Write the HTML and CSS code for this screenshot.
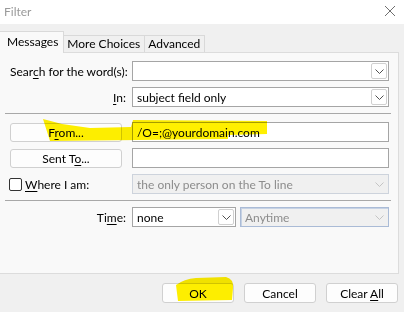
FILE: index.html
```html
<!DOCTYPE html>
<html lang="en">
<head>
    <meta charset="UTF-8">
    <title>Filter</title>
    <link rel="stylesheet" href="styles.css">
</head>
<body>
    <div class="window">
        <div class="titlebar">
            <span class="title">Filter</span>
            <svg class="close" width="12" height="12" viewBox="0 0 12 12">
                <path d="M1 1 L11 11 M11 1 L1 11" stroke="#6f6f6f" stroke-width="1" fill="none"/>
            </svg>
        </div>

        <div class="tabs">
            <div class="tab active">Messages</div>
            <div class="tab">More Choices</div>
            <div class="tab">Advanced</div>
        </div>

        <div class="panel">
            <div class="row">
                <label class="lbl">Sear<u>c</u>h for the word(s):</label>
                <div class="combo">
                    <span class="value"></span>
                    <span class="drop"><svg width="9" height="5" viewBox="0 0 9 5"><path d="M0.5 0.5 L4.5 4.5 L8.5 0.5" stroke="#505050" fill="none"/></svg></span>
                </div>
            </div>
            <div class="row">
                <label class="lbl"><u>I</u>n:</label>
                <div class="combo">
                    <span class="value">subject field only</span>
                    <span class="drop"><svg width="9" height="5" viewBox="0 0 9 5"><path d="M0.5 0.5 L4.5 4.5 L8.5 0.5" stroke="#505050" fill="none"/></svg></span>
                </div>
            </div>

            <div class="sep first"></div>

            <div class="row">
                <button class="btn side">F<u>r</u>om...</button>
                <div class="field">/O=;@yourdomain.com</div>
            </div>
            <div class="row">
                <button class="btn side">Sent T<u>o</u>...</button>
                <div class="field"></div>
            </div>
            <div class="row">
                <label class="check"><span class="box"></span><span><u>W</u>here I am:</span></label>
                <div class="combo disabled">
                    <span class="value">the only person on the To line</span>
                    <span class="drop"><svg width="9" height="5" viewBox="0 0 9 5"><path d="M0.5 0.5 L4.5 4.5 L8.5 0.5" stroke="#c4c4c4" fill="none"/></svg></span>
                </div>
            </div>

            <div class="sep"></div>

            <div class="row">
                <label class="lbl">Ti<u>m</u>e:</label>
                <div class="pair">
                    <div class="combo short">
                        <span class="value">none</span>
                        <span class="drop"><svg width="9" height="5" viewBox="0 0 9 5"><path d="M0.5 0.5 L4.5 4.5 L8.5 0.5" stroke="#505050" fill="none"/></svg></span>
                    </div>
                    <div class="combo disabled blue">
                        <span class="value">Anytime</span>
                        <span class="drop"><svg width="9" height="5" viewBox="0 0 9 5"><path d="M0.5 0.5 L4.5 4.5 L8.5 0.5" stroke="#c4c4c4" fill="none"/></svg></span>
                    </div>
                </div>
            </div>
        </div>

        <div class="footer">
            <button class="btn">OK</button>
            <button class="btn">Cancel</button>
            <button class="btn">Clear <u>A</u>ll</button>
        </div>

        <!-- highlighter marks drawn over the dialog -->
        <svg class="marker" width="404" height="312" viewBox="0 0 404 312">
            <path d="M43 119 L62 124 L90 128 L131 127 L133 120 L267 121 L267 134 L228 135 L228 139 L50 141 Z" fill="#fff000"/>
            <path d="M176 285 Q184 279 196 278 L226 277 Q234 279 233 288 L232 300 L178 301 Z" fill="#fff000"/>
        </svg>
    </div>
</body>
</html>
```

FILE: styles.css
```css
* {
    box-sizing: border-box;
    margin: 0;
    padding: 0;
}
body {
    background: #f0f0f0;
    font-family: 'Lato', sans-serif;
    font-size: 12px;
    color: #000;
}
u {
    text-decoration-thickness: 1px;
    text-underline-offset: 2px;
}
.window {
    position: relative;
    width: 404px;
    height: 312px;
    background: #f0f0f0;
    overflow: hidden;
}
.titlebar {
    height: 24px;
    background: #fff;
    display: flex;
    align-items: center;
    justify-content: space-between;
    padding: 0 8px 2px 4px;
}
.title {
    color: #9a9a9a;
}

/* tabs */
.tabs {
    display: flex;
    align-items: flex-end;
    margin-top: 7px;
    height: 21px;
}
.tab {
    height: 17px;
    padding: 0 4px 0 3px;
    line-height: 16px;
    border: 1px solid #d9d9d9;
    border-bottom: none;
    border-left: none;
    background: #f0f0f0;
    white-space: nowrap;
}
.tab.active {
    height: 22px;
    margin-bottom: -1px;
    padding: 0 5px 0 7px;
    line-height: 19px;
    background: #f9f9f9;
    position: relative;
}

/* main panel */
.panel {
    margin-right: 5px;
    height: 222px;
    background: #f9f9f9;
    border: 1px solid #dcdcdc;
    border-left: none;
    padding: 8px 9px 0 10px;
    display: flex;
    flex-direction: column;
    gap: 6px;
}
.row {
    display: grid;
    grid-template-columns: 116px 257px;
    column-gap: 6px;
    height: 20px;
    align-items: center;
}
.lbl {
    text-align: right;
    white-space: nowrap;
}
.sep {
    height: 1px;
    background: #a8a8a8;
    margin-right: -2px;
    margin-left: -5px;
}
.sep.first {
    margin-bottom: 2px;
}

.combo, .field {
    height: 20px;
    border: 1px solid #a5a5a5;
    background: #fff;
    display: flex;
    align-items: center;
    justify-content: space-between;
    padding-left: 4px;
    white-space: nowrap;
    overflow: hidden;
}
.drop {
    width: 16px;
    height: 16px;
    margin-right: 1px;
    border: 1px solid #d0d0d0;
    border-radius: 2px;
    display: flex;
    align-items: center;
    justify-content: center;
    background: #fff;
}
.combo.disabled {
    background: #f0f0f0;
    border-color: #cdd3dc;
    color: #8c8c8c;
}
.combo.disabled .drop {
    border-color: #f0f0f0;
    background: #f0f0f0;
}
.combo.blue {
    border-color: #aabbd6;
    box-shadow: inset 1px 1px 0 #c6d2e4;
}
.pair {
    display: flex;
    gap: 4px;
}
.combo.short {
    width: 104px;
    flex: none;
}
.pair .combo.blue {
    flex: 1;
}

.btn {
    font-family: inherit;
    font-size: 12px;
    height: 20px;
    background: #fdfdfd;
    border: 1px solid #d0d0d0;
    border-radius: 3px;
    color: #000;
}
.btn.side {
    width: 112px;
    height: 19px;
}

.check {
    display: flex;
    align-items: center;
    gap: 3px;
    margin-left: -1px;
    white-space: nowrap;
}
.box {
    width: 13px;
    height: 13px;
    border: 1px solid #333;
    border-radius: 2px;
    background: #fff;
}

.footer {
    display: flex;
    justify-content: flex-end;
    gap: 10px;
    padding: 9px 6px 0 0;
}
.footer .btn {
    width: 72px;
}

.marker {
    position: absolute;
    top: 0;
    left: 0;
    mix-blend-mode: multiply;
    pointer-events: none;
}
```
